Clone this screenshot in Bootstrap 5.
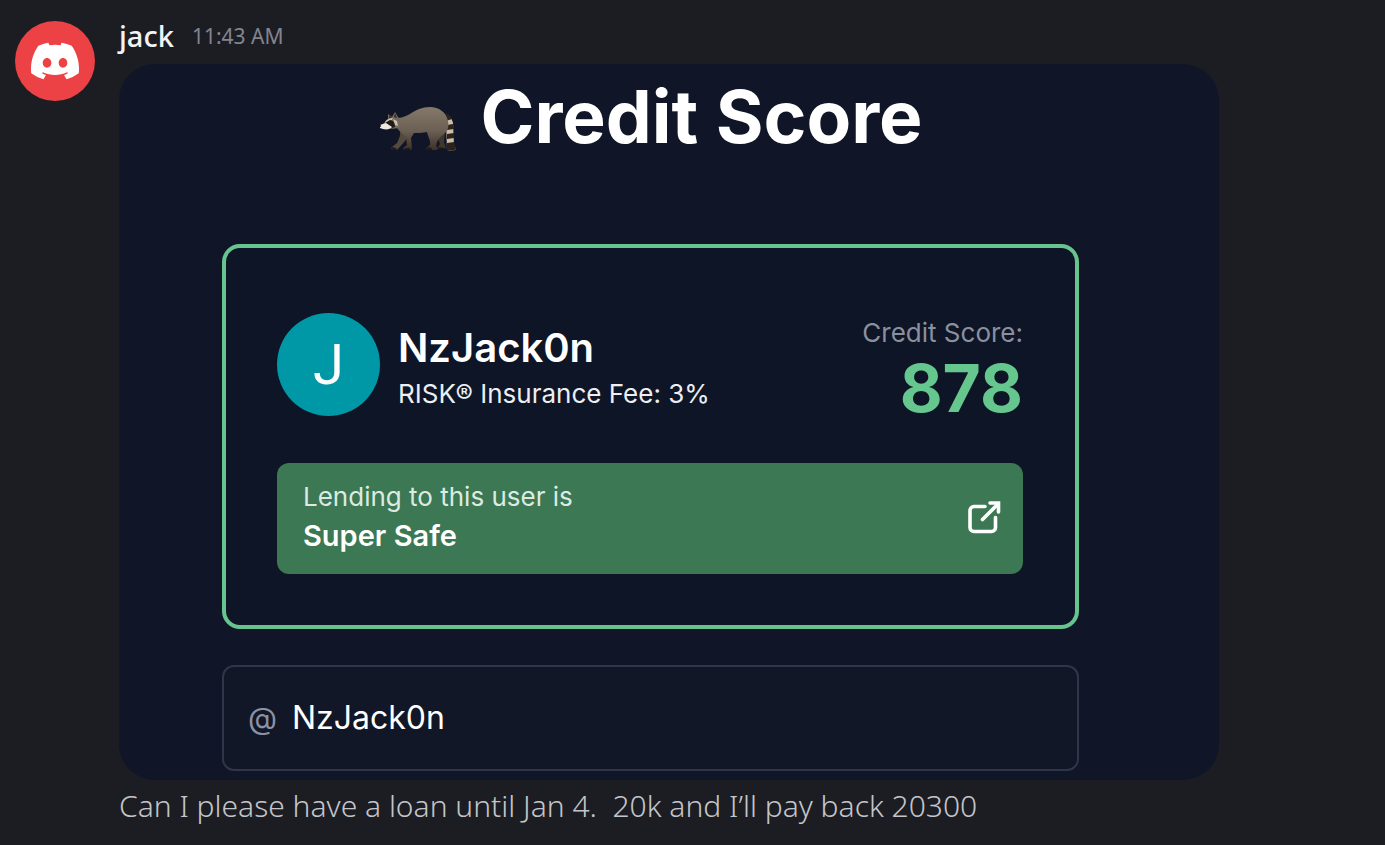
<!DOCTYPE html>
<html lang="en">
<head>
<meta charset="utf-8">
<meta name="viewport" content="width=device-width, initial-scale=1">
<title>jack – message</title>
<link rel="stylesheet" href="https://cdn.jsdelivr.net/npm/bootstrap@5.3.0/dist/css/bootstrap.min.css">
<style>
  body { background: #1c1d22; color: #c4c5ca; font-family: "Noto Sans", sans-serif; }
  .message { padding: 20px 15px 16px; gap: 24px; }
  .user-avatar { width: 80px; height: 80px; background: #ed4245; margin-top: 1px; }
  .msg-head { gap: 18px; height: 32px; }
  .user-name { font-size: 29px; line-height: 32px; font-weight: 500; color: #f2f3f5; }
  .msg-time { font-size: 21px; line-height: 32px; color: #83848f; }
  .msg-text { font-size: 30px; line-height: 40px; margin-top: 6px; font-weight: 300; }
  .attachment { max-width: 1100px; background: #101628; border-radius: 36px; margin-top: 12px;
    padding: 8px 140px 9px 103px; font-family: Inter, sans-serif; color: #fff; }
  .app-title { font-size: 73px; line-height: 90px; font-weight: 700; gap: 22px; margin-bottom: 82px; }
  .score-card { border: 4px solid #68c48e; border-radius: 18px; background: #0d1526;
    padding: 65px 52px 51px 51px; margin-bottom: 36px; }
  .profile { gap: 18px; margin-bottom: 47px; }
  .letter-avatar { width: 103px; height: 103px; background: #0097a7; font-size: 56px; font-family: Roboto, sans-serif; }
  .profile-name { font-size: 40px; line-height: 48px; font-weight: 600; }
  .fee { font-size: 26px; line-height: 44px; color: #eceef2; }
  .score-label { font-size: 26px; line-height: 36px; color: #8b90a0; margin-bottom: 9px; }
  .score-value { font-size: 66px; line-height: 56px; font-weight: 700; color: #65c78e; }
  .verdict { background: #3b7853; border-radius: 12px; padding: 15px 20px 18px 26px; }
  .verdict:hover { color: #fff; }
  .verdict-lead { font-size: 26px; line-height: 38px; color: #dcebe1; }
  .verdict-result { font-size: 29px; line-height: 40px; font-weight: 600; }
  .handle-box { border: 2px solid #30364a; border-radius: 12px; background: #111726; padding: 0 24px; gap: 15px; height: 106px; }
  .handle-at { font-size: 30px; color: #8c92a5; }
  .handle-input { font-size: 32px; line-height: 48px; color: #fff; background: transparent; min-width: 0; outline: 0; }
</style>
</head>
<body>
<main class="message d-flex align-items-start">
  <div class="user-avatar rounded-circle flex-shrink-0 d-flex align-items-center justify-content-center">
    <svg width="48" height="48" viewBox="0 0 16 16" fill="#fff" aria-label="Discord"><path d="M13.545 2.907a13.227 13.227 0 0 0-3.257-1.011.05.05 0 0 0-.052.025c-.141.25-.297.577-.406.833a12.19 12.19 0 0 0-3.658 0 8.258 8.258 0 0 0-.412-.833.051.051 0 0 0-.052-.025c-1.125.194-2.22.534-3.257 1.011a.041.041 0 0 0-.021.018C.356 6.024-.213 9.047.066 12.032c.001.014.01.028.021.037a13.276 13.276 0 0 0 3.995 2.02.05.05 0 0 0 .056-.019c.308-.42.582-.863.818-1.329a.05.05 0 0 0-.01-.059.051.051 0 0 0-.018-.011 8.875 8.875 0 0 1-1.248-.595.05.05 0 0 1-.02-.066.051.051 0 0 1 .015-.019c.084-.063.168-.129.248-.195a.05.05 0 0 1 .051-.007c2.619 1.196 5.454 1.196 8.041 0a.052.052 0 0 1 .053.007c.08.066.164.132.248.195a.051.051 0 0 1-.004.085 8.254 8.254 0 0 1-1.249.594.05.05 0 0 0-.03.03.052.052 0 0 0 .003.041c.24.465.515.909.817 1.329a.05.05 0 0 0 .056.019 13.235 13.235 0 0 0 4.001-2.02.049.049 0 0 0 .021-.037c.334-3.451-.559-6.449-2.366-9.106a.034.034 0 0 0-.02-.019Zm-8.198 7.307c-.789 0-1.438-.724-1.438-1.612 0-.889.637-1.613 1.438-1.613.807 0 1.45.73 1.438 1.613 0 .888-.637 1.612-1.438 1.612Zm5.316 0c-.788 0-1.438-.724-1.438-1.612 0-.889.637-1.613 1.438-1.613.807 0 1.451.73 1.438 1.613 0 .888-.631 1.612-1.438 1.612Z"/></svg>
  </div>
  <article class="flex-grow-1">
    <header class="msg-head d-flex align-items-center">
      <span class="user-name">jack</span>
      <time class="msg-time">11:43 AM</time>
    </header>
    <section class="attachment">
      <h1 class="app-title d-flex align-items-center justify-content-center">
        <svg class="align-self-end mb-2" width="80" height="50" viewBox="0 0 80 50" aria-label="Raccoon">
          <defs>
            <linearGradient id="fur" x1="0" y1="0" x2="0" y2="1"><stop offset="0" stop-color="#85796b"/><stop offset=".55" stop-color="#6b6053"/><stop offset="1" stop-color="#3c3028"/></linearGradient>
          </defs>
          <!-- tail -->
          <path d="M67 11c4 0 7 3 8 8l1 22 2 4-3 2-6-1-1-30z" fill="#cbbfa6"/>
          <path d="M67 10c4 0 6 2 7 5l-6 2zM69 21l6-1 1 5-7 1zM69 30l7-1v5l-7 1zM69 39l7-1 2 7-3 2-6-1z" fill="#2c231f"/>
          <!-- far legs -->
          <path d="M59 26l8 2-1 10 2 7h-7l-1-2 2-3-3-8z" fill="#41362c"/>
          <path d="M22 24c1 7-1 11-3 15l-5 4-1 2 6 1 8-9 5-9z" fill="#54493e"/>
          <!-- body and near legs -->
          <path d="M19 14c5 0 9-2 13-4 6-4 12-7 20-7 9 0 16 5 18 14 1 6 0 10-4 13-4 3-7 6-8 12l2 2-1 2H49l-1-2 4-3c1-4-2-8-3-13-4 1-9 1-13 1l-3 5 1 10-1 2h-7l-1-2 4-3-1-8c-4-3-8-7-11-12z" fill="url(#fur)"/>
          <!-- head -->
          <path d="M10 15v-5l4 3 3-5 3 5c3 3 4 7 2 10-3 2-8 2-13 1l-6-2z" fill="#75695b"/>
          <path d="M11 14v-3l3 3zM16 13l1-4 2 5z" fill="#342c28"/>
          <path d="M7 18c2-3 5-4 8-4l-2 3-6 3zM15 15l4 2 1 5-3-1z" fill="#c9c0b2"/>
          <path d="M7 19l5-3c3 0 5 3 5 7l-3 1-4-3z" fill="#211b1a"/>
          <path d="M2 21l6-2 6 4c-2 3-8 3-12 1z" fill="#eee9e0"/>
          <circle cx="2" cy="22" r="1" fill="#161214"/>
          <path d="M14 43l4 1 1 2h-6zM27 44h5v2h-6zM49 43l5 1v2h-6zM61 43l6 1 1 1h-7z" fill="#241b18"/>
        </svg>
        <span>Credit Score</span>
      </h1>
      <div class="score-card">
        <div class="profile d-flex align-items-end">
          <div class="letter-avatar rounded-circle flex-shrink-0 d-flex align-items-center justify-content-center">J</div>
          <div>
            <div class="profile-name">NzJack0n</div>
            <div class="fee">RISK® Insurance Fee: 3%</div>
          </div>
          <div class="ms-auto text-end">
            <div class="score-label">Credit Score:</div>
            <div class="score-value">878</div>
          </div>
        </div>
        <a href="#" class="verdict d-flex align-items-center justify-content-between text-white text-decoration-none">
          <span>
            <span class="verdict-lead d-block">Lending to this user is</span>
            <span class="verdict-result d-block">Super Safe</span>
          </span>
          <svg width="36" height="36" viewBox="0 0 36 36" fill="none" stroke="#fff" stroke-width="3.6" stroke-linecap="round" stroke-linejoin="round" aria-label="Open"><path d="M18 7.500H7a4 4 0 0 0-4 4v17a4 4 0 0 0 4 4h17.500a4 4 0 0 0 4-4V18.500"/><path d="M15.500 20.500L30 6"/><path d="M23 4h8.500v9" stroke-linejoin="miter"/></svg>
        </a>
      </div>
      <div class="handle-box d-flex align-items-center">
        <label class="handle-at" for="handle">@</label>
        <input id="handle" class="handle-input border-0 p-0 flex-grow-1" type="text" value="NzJack0n">
      </div>
    </section>
    <p class="msg-text mb-0">Can I please have a loan until Jan 4.&nbsp; 20k and I’ll pay back 20300</p>
  </article>
</main>
<script src="https://cdn.jsdelivr.net/npm/bootstrap@5.3.0/dist/js/bootstrap.bundle.min.js"></script>
</body>
</html>
